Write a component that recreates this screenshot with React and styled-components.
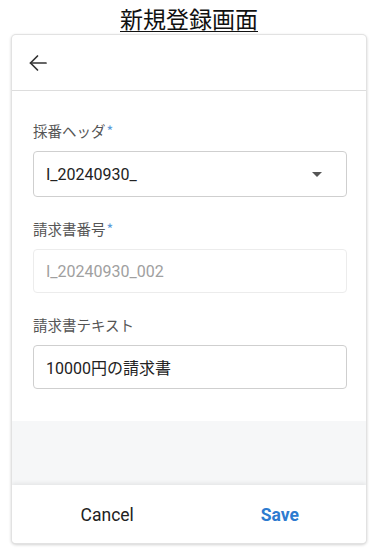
import React from 'react';
import styled, { createGlobalStyle } from 'styled-components';

const GlobalStyle = createGlobalStyle`
  html, body {
    margin: 0;
    padding: 0;
    background: #ffffff;
  }
  body {
    font-family: Roboto, "Noto Sans CJK JP", sans-serif;
  }
`;

const Page = styled.div`
  width: 378px;
  height: 550px;
  display: flex;
  flex-direction: column;
  box-sizing: border-box;
`;

const Title = styled.h1`
  margin: 0;
  height: 35px;
  display: flex;
  align-items: center;
  justify-content: center;
  font-family: "Noto Sans CJK JP", sans-serif;
  font-weight: 400;
  font-size: 23px;
  color: #111;
  text-decoration: underline;
  text-underline-offset: 3px;
  text-decoration-thickness: 1px;
`;

const Card = styled.div`
  margin: 0 12px;
  height: 508px;
  display: flex;
  flex-direction: column;
  border-radius: 4px;
  background: #fff;
  box-shadow: 0 0 0 1px #e2e2e2, 0 1px 3px 1px rgba(0, 0, 0, 0.18);
  overflow: hidden;
`;

const Header = styled.div`
  height: 56px;
  display: flex;
  align-items: center;
  padding-left: 13px;
  border-bottom: 1px solid #dddddd;
  box-sizing: border-box;
`;

const BackButton = styled.button`
  width: 26px;
  height: 26px;
  padding: 0;
  border: none;
  background: none;
  color: #333;
  display: flex;
  align-items: center;
  justify-content: center;
`;

const Body = styled.div`
  padding: 30px 19px 32px 21px;
  display: flex;
  flex-direction: column;
  gap: 22px;
`;

const FieldGroup = styled.div`
  display: flex;
  flex-direction: column;
  gap: 10px;
`;

const Label = styled.label`
  font-family: "Noto Sans CJK JP", sans-serif;
  font-size: 14.5px;
  line-height: 20px;
  color: #555;
`;

const Required = styled.span`
  color: #5b9bd9;
  margin-left: 1px;
`;

const Box = styled.div`
  height: ${p => (p.tall ? 46 : 44)}px;
  box-sizing: border-box;
  border: 1px solid ${p => (p.disabled ? '#ececec' : '#cfcfcf')};
  border-radius: 4px;
  display: flex;
  align-items: center;
  justify-content: space-between;
  padding: 0 24px 0 12px;
  font-family: Roboto, "Noto Sans CJK JP", sans-serif;
  font-size: 16px;
  color: ${p => (p.disabled ? '#a0a0a0' : '#222')};
`;

const Caret = styled.span`
  width: 0;
  height: 0;
  border-left: 5px solid transparent;
  border-right: 5px solid transparent;
  border-top: 5px solid #555;
`;

const Filler = styled.div`
  flex: 1;
  background: #f6f7f8;
`;

const Footer = styled.div`
  height: 58px;
  display: flex;
  padding-left: 9px;
  box-shadow: 0 -2px 4px rgba(0, 0, 0, 0.07);
  position: relative;
  background: #fff;
`;

const FooterButton = styled.button`
  flex: 1;
  border: none;
  background: none;
  font-family: Roboto, sans-serif;
  font-size: 17.5px;
  font-weight: ${p => (p.primary ? 700 : 400)};
  color: ${p => (p.primary ? '#2d7bd0' : '#222')};
  padding: 2px 0 0;
`;

const ArrowLeft = () => (
  <svg width="24" height="24" viewBox="0 0 24 24" fill="none" stroke="currentColor" strokeWidth="1.7" strokeLinecap="round" strokeLinejoin="round">
    <path d="M20 12H4.5" />
    <path d="M11.5 19l-7-7 7-7" />
  </svg>
);

const App = () => {
  return (
    <Page>
      <GlobalStyle />
      <Title>新規登録画面</Title>
      <Card>
        <Header>
          <BackButton><ArrowLeft /></BackButton>
        </Header>
        <Body>
          <FieldGroup>
            <Label>採番ヘッダ<Required>*</Required></Label>
            <Box tall>
              <span>I_20240930_</span>
              <Caret />
            </Box>
          </FieldGroup>
          <FieldGroup>
            <Label>請求書番号<Required>*</Required></Label>
            <Box disabled>I_20240930_002</Box>
          </FieldGroup>
          <FieldGroup>
            <Label>請求書テキスト</Label>
            <Box>10000円の請求書</Box>
          </FieldGroup>
        </Body>
        <Filler />
        <Footer>
          <FooterButton>Cancel</FooterButton>
          <FooterButton primary>Save</FooterButton>
        </Footer>
      </Card>
    </Page>
  );
};

export default App;
